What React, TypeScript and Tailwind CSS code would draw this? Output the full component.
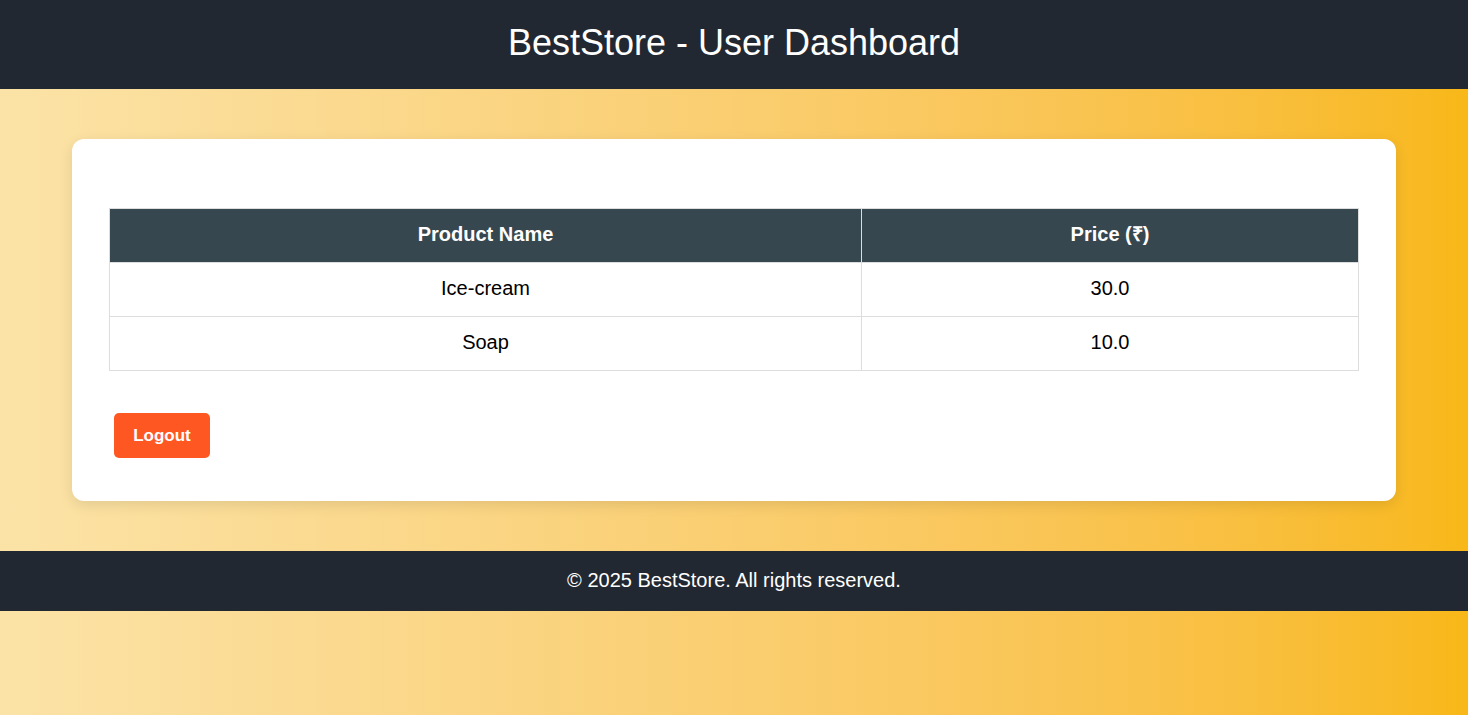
type Product = {
  name: string;
  price: string;
};

const PRODUCTS: Product[] = [
  { name: 'Ice-cream', price: '30.0' },
  { name: 'Soap', price: '10.0' }
];

export default function App() {
  return (
    <div className="min-h-[715px] bg-gradient-to-r from-[#fbe3a7] to-[#f8b817] font-['Liberation_Sans',Arial,sans-serif] text-black">
      <header className="flex h-[89px] items-center justify-center bg-[#222831] pb-[3px]">
        <h1 className="text-[36px] leading-none text-white">BestStore - User Dashboard</h1>
      </header>

      <main className="mx-[72px] mt-[50px] rounded-xl bg-white px-[37px] pt-[69px] pb-[43px] shadow-[0_4px_14px_rgba(0,0,0,0.1)]">
        <table className="w-full border-collapse text-center text-[20px]">
          <thead>
            <tr className="h-[54px] bg-[#37474f] text-white">
              <th className="w-[752px] border border-[#dddddd] pb-[3px] font-bold">Product Name</th>
              <th className="border border-[#dddddd] pb-[3px] font-bold">Price (₹)</th>
            </tr>
          </thead>
          <tbody>
            {PRODUCTS.map((product) => (
              <tr key={product.name} className="h-[54px]">
                <td className="border border-[#dddddd] pb-[3px]">{product.name}</td>
                <td className="border border-[#dddddd] pb-[3px]">{product.price}</td>
              </tr>
            ))}
          </tbody>
        </table>

        <button
          type="button"
          className="mt-[42px] ml-[5px] h-[45px] w-[96px] rounded-[5px] bg-[#ff5722] text-[17px] font-bold text-white"
        >
          Logout
        </button>
      </main>

      <footer className="mt-[50px] flex h-[60px] items-center justify-center bg-[#222831] pb-[2px] text-[20px] text-white">
        © 2025 BestStore. All rights reserved.
      </footer>
    </div>
  );
}
